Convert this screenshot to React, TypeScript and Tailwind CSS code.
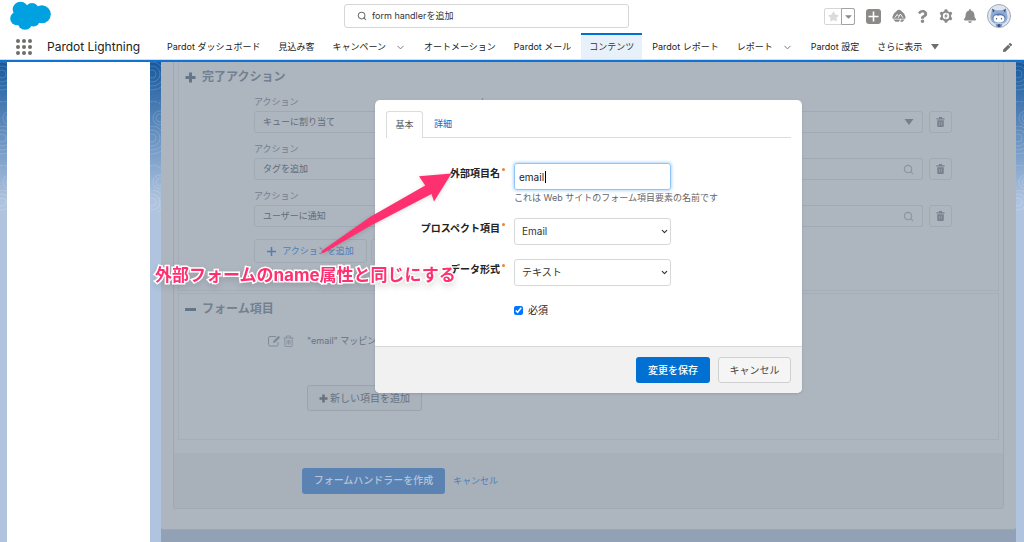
import { useState, ReactNode } from 'react';
import { ChevronDown, Search } from 'lucide-react';
import { FaBell, FaCaretDown, FaPen, FaQuestion, FaStar } from 'react-icons/fa';

type NavItem = { label: string; menu?: 'chevron' | 'caret'; active?: boolean };

const navItems: NavItem[] = [
  { label: 'Pardot ダッシュボード' },
  { label: '見込み客' },
  { label: 'キャンペーン', menu: 'chevron' },
  { label: 'オートメーション' },
  { label: 'Pardot メール' },
  { label: 'コンテンツ', active: true },
  { label: 'Pardot レポート' },
  { label: 'レポート', menu: 'chevron' },
  { label: 'Pardot 設定' },
  { label: 'さらに表示', menu: 'caret' },
];

const actions = [
  { id: 'queue', name: 'キューに割り当て', target: 'ト', kind: 'select' },
  { id: 'tag', name: 'タグを追加', target: '', kind: 'search' },
  { id: 'notify', name: 'ユーザーに通知', target: '', kind: 'search' },
];

function CloudLogo() {
  return (
    <svg viewBox="0 0 42 30" className="h-[30px] w-[42px]" fill="#00a1e0" aria-hidden="true">
      <circle cx="10.500" cy="8.500" r="7.800" />
      <circle cx="22" cy="8.800" r="6.800" />
      <circle cx="31.800" cy="13.300" r="9" />
      <circle cx="7" cy="17.500" r="6.800" />
      <circle cx="15" cy="21.500" r="7.300" />
      <circle cx="23.500" cy="19" r="6.500" />
      <rect x="8" y="8" width="22" height="12" />
    </svg>
  );
}

function PlusIcon() {
  return (
    <svg viewBox="0 0 11 11" className="h-[11px] w-[11px]" fill="none" stroke="currentColor" strokeWidth="3" aria-hidden="true">
      <path d="M5.500.5V10.500M.5 5.500H10.500" />
    </svg>
  );
}

function Trailhead() {
  return (
    <svg viewBox="0 0 14 14" className="h-[14px] w-[14px]" aria-hidden="true">
      <path d="M7 .8C8.600.8 9.300 2 10.400 2.900C11.600 3.900 12.600 4.800 12.800 6.200C13.700 7.400 13.800 8.600 13.100 9.700H.9C.2 8.600.3 7.400 1.200 6.200C1.400 4.800 2.400 3.900 3.600 2.900C4.700 2 5.400.8 7 .8Z" fill="#8c8a89" />
      <path d="M2.800 8.800L5.200 5.400L6.600 7.200M6.200 8.800L8.400 5L11 8.800" fill="none" stroke="#fff" strokeWidth=".9" />
      <path d="M1.300 10.400H8L7 12.800H3.500ZM9 10.400H12.700L10.600 12.800H8.200Z" fill="#8c8a89" />
    </svg>
  );
}

function SetupGear() {
  return (
    <svg viewBox="0 0 14 14" className="h-[14px] w-[14px]" aria-hidden="true">
      <g fill="#8c8a89">
        <rect x="5.500" y=".3" width="3" height="13.400" rx="1" />
        <rect x="5.500" y=".3" width="3" height="13.400" rx="1" transform="rotate(60 7 7)" />
        <rect x="5.500" y=".3" width="3" height="13.400" rx="1" transform="rotate(120 7 7)" />
        <circle cx="7" cy="7" r="5.200" />
      </g>
      <circle cx="7" cy="7" r="3.200" fill="#fff" />
      <path d="M7.800 4L5 7.400H6.600L6 10L9 6.500H7.300Z" fill="#8c8a89" />
    </svg>
  );
}

function Avatar() {
  return (
    <svg viewBox="0 0 24 24" className="h-6 w-6" aria-hidden="true">
      <circle cx="12" cy="12" r="11.500" fill="#dfe5ee" stroke="#a3a9b1" />
      <path d="M5 4.500L9 6.200H15L19 4.500L20 10.500C21.500 14 19.500 18.500 16 19.500H8C4.500 18.500 2.500 14 4 10.500Z" fill="#8eabd6" />
      <path d="M5.200 4.800L7.600 6.500L6 8.500ZM18.800 4.800L16.400 6.500L18 8.500Z" fill="#38507c" />
      <ellipse cx="12" cy="14" rx="6.500" ry="4.600" fill="#5b78a8" />
      <path d="M6.500 14.500C6.500 11.500 9 10.500 11 11.800C13 10.500 17.500 11.500 17.500 14.500C17.500 17.500 15 18.500 12 18.500S6.500 17.500 6.500 14.500Z" fill="#fff" />
      <circle cx="9.500" cy="14.800" r=".7" fill="#38507c" />
      <circle cx="14.500" cy="14.800" r=".7" fill="#38507c" />
      <path d="M8.500 20H15.500L14.500 23H9.500Z" fill="#7d9ccb" />
      <circle cx="12" cy="21.500" r="1.500" fill="#38507c" />
    </svg>
  );
}

function TrashSolid() {
  return (
    <svg viewBox="0 0 9 10" className="h-[10px] w-[9px]" fill="#78838f" aria-hidden="true">
      <path d="M3 0H6V1.200H8.600V2.500H.4V1.200H3Z" />
      <path d="M1.200 3.200H7.800V9A1 1 0 0 1 6.800 10H2.200A1 1 0 0 1 1.200 9Z" />
      <path d="M3.400 4.900V8.200M5.600 4.900V8.200" stroke="#adb5bf" strokeWidth=".5" />
    </svg>
  );
}

function MappingIcons() {
  return (
    <svg viewBox="0 0 26 12" className="h-3 w-[26px]" fill="none" stroke="#808b98" aria-hidden="true">
      <path d="M8 1.500H2A1.500 1.500 0 0 0 .5 3V9.500A1.500 1.500 0 0 0 2 11H8.500A1.500 1.500 0 0 0 10 9.500V7" />
      <path d="M5 8L5.500 5.800L10.500.8L12.200 2.500L7.200 7.500Z" fill="#808b98" stroke="none" />
      <path d="M15.500 3H25.500M18.500 3V1H22.500V3M16.800 3V10.500A1 1 0 0 0 17.800 11.500H23.200A1 1 0 0 0 24.200 10.500V3M19 5V9.500M20.500 5V9.500M22 5V9.500" strokeWidth=".8" />
    </svg>
  );
}

// Contour lines on the blue page background
function Contours({ id }: { id: string }) {
  return (
    <svg className="h-[150px] w-full" aria-hidden="true">
      <defs>
        <pattern id={id} width="40" height="64" patternUnits="userSpaceOnUse">
          <g fill="none" stroke="#fff" strokeOpacity=".2" strokeWidth=".8">
            <circle cx="2" cy="12" r="4" />
            <circle cx="2" cy="12" r="8" />
            <circle cx="2" cy="12" r="12" />
            <circle cx="2" cy="12" r="16" />
            <path d="M0 40Q6 38 12 43T40 42" strokeDasharray="3 1" />
            <circle cx="10" cy="56" r="4" />
            <circle cx="10" cy="56" r="7" />
          </g>
        </pattern>
      </defs>
      <rect width="100%" height="150" fill={`url(#${id})`} />
    </svg>
  );
}

function HeaderBar() {
  return (
    <div className="grid h-[33px] grid-cols-[344fr_285fr_395fr] items-center">
      <a href="#home" aria-label="Salesforce" className="pb-[2px] pl-[10px]">
        <CloudLogo />
      </a>
      <label className="mb-px flex h-6 items-center gap-[5px] rounded-[3px] border border-[#d8d6d4] px-3">
        <Search className="h-[10px] w-[10px] text-[#706e6b]" strokeWidth={2.5} />
        <input
          type="text"
          aria-label="検索"
          defaultValue="form handlerを追加"
          className="min-w-0 flex-1 text-[9px] leading-4 text-[#333] outline-none"
        />
      </label>
      <div className="flex items-center justify-end gap-[11px] pr-[13px] pb-px text-[#8c8a89]">
        <div className="flex h-[17px] rounded-[2px] border border-[#d8d6d4]">
          <button type="button" aria-label="お気に入り" className="flex w-4 items-center justify-center text-[#dddbda]">
            <FaStar size={11} />
          </button>
          <button type="button" aria-label="お気に入りリスト" className="-my-px -mr-px flex w-[14px] items-center justify-center rounded-r-[2px] border border-[#a5a3a1]">
            <FaCaretDown size={11} />
          </button>
        </div>
        <button type="button" aria-label="作成" className="flex h-[15px] w-[15px] items-center justify-center rounded-[3px] bg-[#8c8a89] text-white">
          <svg viewBox="0 0 11 11" className="h-[11px] w-[11px]" stroke="currentColor" strokeWidth="1.600"><path d="M5.500.5V10.500M.5 5.500H10.500" /></svg>
        </button>
        <button type="button" aria-label="Trailhead"><Trailhead /></button>
        <button type="button" aria-label="ヘルプ" className="-mx-px"><FaQuestion size={13} /></button>
        <button type="button" aria-label="設定"><SetupGear /></button>
        <button type="button" aria-label="通知" className="-mx-px"><FaBell size={14} /></button>
        <button type="button" aria-label="プロフィール"><Avatar /></button>
      </div>
    </div>
  );
}

function NavBar() {
  return (
    <nav className="flex h-[27px] items-stretch border-b border-[#dddbda] pr-3">
      <button type="button" aria-label="アプリケーションランチャー" className="flex items-center pt-px pl-4">
        <span className="grid grid-cols-3 gap-[2px]">
          {[0, 1, 2, 3, 4, 5, 6, 7, 8].map((i) => (
            <span key={i} className="h-1 w-1 rounded-full bg-[#706e6b]" />
          ))}
        </span>
      </button>
      <div className="flex w-[127px] shrink-0 items-center pt-[2px] pl-[15px] text-[12px] text-[#222]">Pardot Lightning</div>
      <div className="flex flex-1 items-stretch gap-[2px]">
        {navItems.map((item) => (
          <a
            key={item.label}
            href="#nav"
            className={
              item.active
                ? 'flex items-center border-t-2 border-[#0070d2] bg-[#e8f0fa] px-2 text-[9px] whitespace-nowrap text-[#333]'
                : 'flex items-center gap-[9px] px-2 pt-[2px] text-[9px] whitespace-nowrap text-[#222]'
            }
          >
            {item.label}
            {item.menu === 'chevron' && <ChevronDown className="h-[11px] w-[11px] text-[#706e6b]" />}
            {item.menu === 'caret' && (
              <svg viewBox="0 0 8 6" className="h-[6px] w-2" fill="#706e6b"><path d="M0 0H8L4 5.500Z" /></svg>
            )}
          </a>
        ))}
      </div>
      <button type="button" aria-label="ナビゲーションを編集" className="pt-[2px] text-[#706e6b]">
        <FaPen size={9} />
      </button>
    </nav>
  );
}

function CompletionActions() {
  return (
    <section className="h-[229px] border-x border-b border-[#a5adb8] pt-[7px]">
      <h2 className="flex h-4 items-center gap-[6px] pl-[6px] text-[12px] font-bold text-[#72808f]">
        <span className="text-[#637688]"><PlusIcon /></span>
        完了アクション
      </h2>
      <div className="mt-3 flex flex-col gap-[11px] pr-[46px] pl-[75px]">
        {actions.map((action) => (
          <div key={action.id} className="flex items-end">
            <label className="flex w-[225px] shrink-0 flex-col gap-1 text-[9px] leading-[10px] text-[#75808c]">
              アクション
              <select className="h-[22px] appearance-none rounded-l-[3px] border border-[#a1a9b4] px-2 text-[9px] text-[#616b77]">
                <option>{action.name}</option>
              </select>
            </label>
            <label className="flex flex-1 flex-col gap-1 text-[9px] leading-[10px] text-[#75808c]">
              {action.target}
              <span className="flex h-[22px] items-center rounded-r-[3px] border border-l-0 border-[#a1a9b4] pr-2">
                {action.kind === 'select' ? (
                  <>
                    <select aria-label="割り当て先" className="h-full min-w-0 flex-1 appearance-none" />
                    <svg viewBox="0 0 10 6" className="h-[6px] w-[10px]" fill="#75808c"><path d="M.5 0H9.500L5 6Z" /></svg>
                  </>
                ) : (
                  <>
                    <input type="text" aria-label="対象" className="h-full min-w-0 flex-1 outline-none" />
                    <Search className="h-[11px] w-[11px] text-[#8a95a1]" strokeWidth={2.5} />
                  </>
                )}
              </span>
            </label>
            <button type="button" aria-label="削除" className="ml-[6px] flex h-[22px] w-[23px] items-center justify-center rounded-[3px] border border-[#a1a9b4]">
              <TrashSolid />
            </button>
          </div>
        ))}
      </div>
      <div className="mt-3 flex gap-1 pl-[75px]">
        <button type="button" className="flex h-6 w-[113px] items-center justify-center gap-[6px] rounded-[3px] border border-[#a1a9b4] text-[9px] text-[#4d7fbb]">
          <svg viewBox="0 0 9 9" className="h-[9px] w-[9px]" stroke="#4d7fbb" strokeWidth="1.500"><path d="M4.500 0V9M0 4.500H9" /></svg>
          アクションを追加
        </button>
        <button type="button" aria-label="アクションメニュー" className="h-6 w-8 rounded-[3px] border border-[#a1a9b4]" />
      </div>
    </section>
  );
}

function FormFields() {
  return (
    <section className="mt-[2px] h-[147px] border border-[#a5adb8] pt-[7px]">
      <h2 className="flex h-4 items-center gap-[6px] pl-[6px] text-[12px] font-bold text-[#72808f]">
        <span className="h-[3px] w-[11px] bg-[#637688]" />
        フォーム項目
      </h2>
      <div className="mt-4 flex h-4 items-center gap-[13px] pl-[89px] text-[9px] text-[#68727e]">
        <MappingIcons />
        "email" マッピング
      </div>
      <button type="button" className="mt-[36px] ml-[128px] flex h-[26px] w-[115px] items-center justify-center gap-[2px] rounded-[3px] border border-[#99a2ad] bg-[#aab2bc] text-[10px] text-[#68727e]">
        <svg viewBox="0 0 9 9" className="h-[9px] w-[9px]" stroke="currentColor" strokeWidth="2.500"><path d="M4.500.5V8.500M.5 4.500H8.500" /></svg>
        新しい項目を追加
      </button>
    </section>
  );
}

function FieldRow({ id, label, children }: { id: string; label: string; children: ReactNode }) {
  return (
    <div className="flex items-start">
      <label htmlFor={id} className="w-[125px] pt-[2px] text-right text-[10px] leading-4 font-bold text-[#222]">
        {label}
      </label>
      <span className="mt-[5px] ml-[2px] h-[3px] w-[3px] rounded-full bg-[#e8862e]" />
      <div className="ml-[9px]">{children}</div>
    </div>
  );
}

function SelectBox({ id, value }: { id: string; value: string }) {
  return (
    <div className="relative flex h-[27px] w-[157px] items-center">
      <select id={id} className="h-full w-full appearance-none rounded-[3px] border border-[#d8d8d8] bg-white pl-[7px] text-[10px] text-[#333]">
        <option>{value}</option>
      </select>
      <ChevronDown className="pointer-events-none absolute right-[2px] h-[9px] w-[9px] text-[#333]" strokeWidth={3} />
    </div>
  );
}

// Pink note with its arrow, laid over the dialog
function Note() {
  return (
    <>
      <svg viewBox="320 168 136 90" className="pointer-events-none absolute top-[68px] -left-[55px] h-[90px] w-[136px] drop-shadow-sm" aria-hidden="true">
        <path d="M451.500 173.500L419 176.300L425.200 185.500L370 217L321.500 251Q321.500 253.800 324 252.800L370 226L431.500 194L434 201.500Z" fill="#ff3070" />
      </svg>
      <p className="pointer-events-none absolute top-[163px] -left-[220px] text-[17px] leading-6 font-bold whitespace-nowrap text-[#ff3070] [paint-order:stroke_fill] [-webkit-text-stroke:3px_#fff] drop-shadow-md">
        外部フォームのname属性と同じにする
      </p>
    </>
  );
}

function FieldDialog() {
  const [externalName, setExternalName] = useState('email');
  const [required, setRequired] = useState(true);

  return (
    <div role="dialog" aria-label="フォーム項目" className="relative w-[427px] rounded-[5px] bg-white shadow-sm">
      <div className="px-[11px] pt-[11px]">
        <div role="tablist" className="flex h-[27px] border-b border-[#dcdcdc] text-[9px]">
          <button type="button" role="tab" aria-selected="true" className="-mb-px w-[37px] rounded-t-[3px] border border-b-0 border-[#dcdcdc] bg-white text-[#555]">
            基本
          </button>
          <button type="button" role="tab" aria-selected="false" className="w-10 text-[#0070d2]">
            詳細
          </button>
        </div>
      </div>
      <div className="h-[208px] pt-[25px]">
        <FieldRow id="external-name" label="外部項目名">
          <div className="relative flex items-center">
            <input
              id="external-name"
              type="text"
              value={externalName}
              onChange={(e) => setExternalName(e.target.value)}
              className="h-[27px] w-[157px] rounded-[3px] border border-[#8fc6f7] px-1 text-[10px] text-[#222] shadow-[0_0_3px_1px_#b5dafc] outline-none"
            />
            <span className="absolute left-[31px] h-3 w-px bg-black" />
          </div>
          <p className="text-[9px] leading-4 whitespace-nowrap text-[#666]">これは Web サイトのフォーム項目要素の名前です</p>
        </FieldRow>
        <div className="mt-3">
          <FieldRow id="prospect-field" label="プロスペクト項目">
            <SelectBox id="prospect-field" value="Email" />
          </FieldRow>
        </div>
        <div className="mt-[14px]">
          <FieldRow id="data-format" label="データ形式">
            <SelectBox id="data-format" value="テキスト" />
          </FieldRow>
        </div>
        <label className="mt-4 ml-[139px] flex items-center gap-[5px] text-[10px] leading-4 text-[#222]">
          <input type="checkbox" checked={required} onChange={(e) => setRequired(e.target.checked)} className="h-[9px] w-[9px] accent-[#0075ff]" />
          必須
        </label>
      </div>
      <div className="flex items-center justify-end gap-2 rounded-b-[5px] border-t border-[#d8d8d8] bg-[#f1f1f1] px-[11px] py-[10px] text-[10px]">
        <button type="button" className="h-[26px] w-[74px] rounded-[3px] bg-[#0070d2] font-medium text-white">変更を保存</button>
        <button type="button" className="h-[26px] w-[73px] rounded-[3px] border border-[#d0d0d0] bg-[#f5f5f5] text-[#444]">キャンセル</button>
      </div>
      <Note />
    </div>
  );
}

export default function App() {
  return (
    <div lang="ja" className="flex min-h-screen flex-col bg-white font-['Inter','Noto_Sans_CJK_JP',sans-serif]">
      <header className="border-b-2 border-[#0f74d1] bg-white">
        <HeaderBar />
        <NavBar />
      </header>
      <div className="flex flex-1 bg-[linear-gradient(#17599e,#b0c4df_140px)]">
        <div className="w-[7px]"><Contours id="contour-left" /></div>
        <aside className="w-[143px] shrink-0 bg-white" />
        <div className="w-[11px]"><Contours id="contour-mid" /></div>
        <main className="relative flex-1 bg-[#92a1b5]">
          <div className="rounded-b-[3px] border-b border-[#9da6b1] bg-[#adb5bf] px-3 pb-5">
            <div className="rounded-b-[3px] border-x border-b border-[#a0a8b3]">
              <div className="px-1 pb-[13px]">
                <CompletionActions />
                <FormFields />
              </div>
              <div className="flex h-[55px] items-center gap-2 bg-[#a8b0ba] pl-32 text-[9px]">
                <button type="button" className="h-[26px] w-[143px] rounded-[3px] bg-[#5a82b3] text-[10px] font-medium text-[#b6c4d6]">
                  フォームハンドラーを作成
                </button>
                <a href="#cancel" className="text-[#4d7fbb]">キャンセル</a>
              </div>
            </div>
          </div>
          <div className="absolute inset-x-0 top-[38px] flex justify-center">
            <FieldDialog />
          </div>
        </main>
        <div className="w-2"><Contours id="contour-right" /></div>
      </div>
    </div>
  );
}
